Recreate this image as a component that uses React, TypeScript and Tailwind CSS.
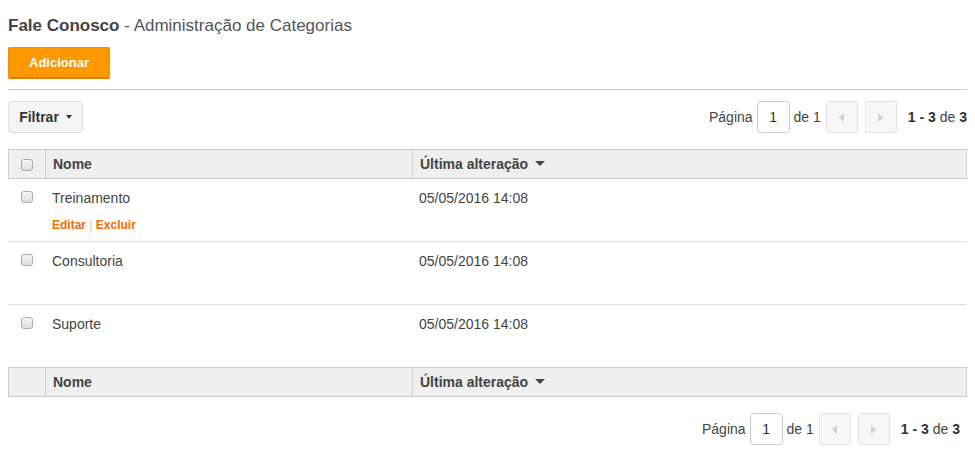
import React from "react";

const font = { fontFamily: '"Liberation Sans", Arial, Helvetica, sans-serif' };

function Check() {
  return (
    <span className="inline-block w-[12px] h-[12px] rounded-[3px] border border-[#a9a9a9] bg-gradient-to-b from-[#f6f6f6] to-[#dedede]" />
  );
}

function SortArrow() {
  return (
    <svg width="10" height="6" viewBox="0 0 10 6" className="ml-[7px] inline-block">
      <path d="M0 0 L10 0 L5 5 Z" fill="#444" />
    </svg>
  );
}

function Pager() {
  return (
    <div className="flex items-center text-[14px] text-[#444]">
      <span>Página</span>
      <div className="ml-[4px] w-[33px] h-[32px] border border-[#ccc] rounded-[4px] flex items-center justify-center text-[#333]">1</div>
      <span className="ml-[4px]">de 1</span>
      <div className="ml-[5px] w-[32px] h-[32px] border border-[#e3e3e3] bg-[#f7f7f7] rounded-[2px] flex items-center justify-center">
        <svg width="5" height="9" viewBox="0 0 5 9"><path d="M5 0 L5 9 L0 4.5 Z" fill="#d0d0d0" /></svg>
      </div>
      <div className="ml-[7px] w-[32px] h-[32px] border border-[#e3e3e3] bg-[#f7f7f7] rounded-[2px] flex items-center justify-center">
        <svg width="5" height="9" viewBox="0 0 5 9"><path d="M0 0 L0 9 L5 4.5 Z" fill="#d0d0d0" /></svg>
      </div>
      <span className="ml-[11px]"><b className="text-[#333]">1 - 3</b> de <b className="text-[#333]">3</b></span>
    </div>
  );
}

const rows = ["Treinamento", "Consultoria", "Suporte"];

export default function App() {
  return (
    <div style={font} className="w-[975px] h-[465px] bg-white px-[8px] pt-[15px] text-[#444]">
      <h1 className="text-[17px] leading-[22px] text-[#555]">
        <b className="text-[#444]">Fale Conosco</b> - Administração de Categorias
      </h1>
      <button className="mt-[10px] w-[102px] h-[32px] bg-[#fd9800] border border-[#f39000] border-b-[2px] border-b-[#e57a00] rounded-[2px] text-white font-bold text-[13px]">
        Adicionar
      </button>
      <div className="mt-[10px] h-px bg-[#ccc]" />
      <div className="mt-[11px] flex items-start justify-between">
        <button className="h-[32px] w-[75px] bg-[#f5f5f5] border border-[#ddd] rounded-[4px] flex items-center justify-center text-[14px] font-bold text-[#333]">
          Filtrar
          <svg width="6" height="4" viewBox="0 0 6 4" className="ml-[7px]"><path d="M0 0 L6 0 L3 4 Z" fill="#333" /></svg>
        </button>
        <Pager />
      </div>
      <div className="mt-[16px] text-[14px]">
        <div className="flex h-[30px] bg-[#efefef] border border-[#ccc] font-bold text-[#444]">
          <div className="w-[37px] flex items-center justify-center border-r border-[#d0d0d0] pt-[1px]"><Check /></div>
          <div className="w-[367px] flex items-center pl-[7px] border-r border-[#d0d0d0]">Nome</div>
          <div className="flex-1 flex items-center pl-[7px]">Última alteração<SortArrow /></div>
        </div>
        {rows.map((r, i) => (
          <div key={r} className="flex h-[63px] border-b border-[#ddd] text-[#444]">
            <div className="w-[37px] flex justify-center pt-[12px] pl-[1px]"><Check /></div>
            <div className="w-[367px] pl-[7px] pt-[11px]">
              <div className="leading-[16px]">{r}</div>
              {i === 0 && (
                <div className="mt-[13px] text-[12px] font-bold leading-[12px] text-[#f66b00]">
                  Editar <span className="font-normal text-[#ccc]">|</span> Excluir
                </div>
              )}
            </div>
            <div className="flex-1 pl-[7px] pt-[11px] leading-[16px]">05/05/2016 14:08</div>
          </div>
        ))}
        <div className="flex h-[30px] bg-[#efefef] border border-[#ccc] font-bold text-[#444] -mt-px">
          <div className="w-[37px] border-r border-[#d0d0d0]" />
          <div className="w-[367px] flex items-center pl-[7px] border-r border-[#d0d0d0]">Nome</div>
          <div className="flex-1 flex items-center pl-[7px]">Última alteração<SortArrow /></div>
        </div>
      </div>
      <div className="mt-[16px] flex justify-end pr-[7px]">
        <Pager />
      </div>
    </div>
  );
}
